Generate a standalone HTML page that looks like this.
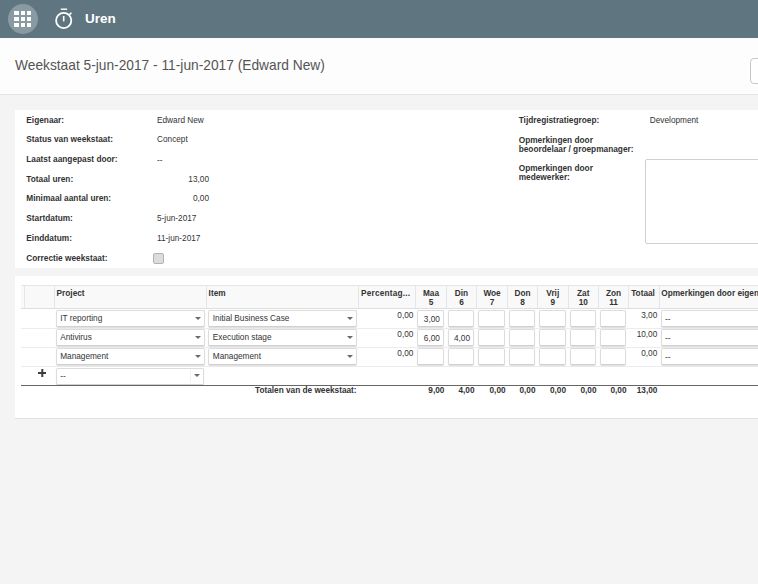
<!DOCTYPE html><html><head><meta charset="utf-8"><style>
*{box-sizing:border-box;margin:0;padding:0}
html,body{width:758px;height:584px;overflow:hidden;background:#f4f4f4;font-family:"Liberation Sans",sans-serif;color:#333}
div{position:absolute;white-space:nowrap}
#hdr{left:0;top:0;width:758px;height:38px;background:#5f7580}
#circ{left:8px;top:4px;width:30px;height:30px;border-radius:50%;background:#8a9aa2}
.sq{width:4.6px;height:4.5px;background:#fff}
#uren{left:85px;top:11.2px;font-size:13.5px;font-weight:bold;color:#fff}
#tbar{left:0;top:38px;width:758px;height:57px;background:#fdfdfd;border-bottom:1px solid #e4e4e4}
#title{left:15px;top:57.8px;font-size:13.75px;color:#555}
#btn{left:750px;top:58px;width:30px;height:26px;border:1px solid #c8c8c8;border-radius:4px;background:#fff}
.panel{left:15px;width:743px;background:#fff}
.lb{font-size:8.3px;font-weight:bold;color:#333;line-height:10px}
.vl{font-size:8.25px;color:#333;line-height:10px}
.hb{font-size:8.25px;font-weight:bold;color:#333;line-height:9px}
.sep{width:1px;background:#e1e8eb}
.dd{height:17px;border:1px solid #dcdcdc;border-bottom-color:#d0d0d0;border-radius:2px;background:#fff;box-shadow:0 1px 1px #dedede}
.dt{font-size:8.25px;color:#333;line-height:10px}
.arr{width:0;height:0;border-left:3px solid transparent;border-right:3px solid transparent;border-top:3.4px solid #6a6a6a}
.inp{height:17px;border:1px solid #dcdcdc;border-bottom-color:#d0d0d0;border-radius:2px;background:#fff;box-shadow:0 1px 1px #dedede}
.rs{height:1px;background:#ececec}
.num{font-size:8.25px;color:#333;line-height:10px;text-align:right}
.tot{font-size:8.25px;font-weight:bold;color:#333;line-height:10px;text-align:right}
</style></head><body>
<div id="hdr"><div id="circ"></div>
<div class="sq" style="left:14.2px;top:10.8px"></div>
<div class="sq" style="left:20.5px;top:10.8px"></div>
<div class="sq" style="left:26.8px;top:10.8px"></div>
<div class="sq" style="left:14.2px;top:16.7px"></div>
<div class="sq" style="left:20.5px;top:16.7px"></div>
<div class="sq" style="left:26.8px;top:16.7px"></div>
<div class="sq" style="left:14.2px;top:22.8px"></div>
<div class="sq" style="left:20.5px;top:22.8px"></div>
<div class="sq" style="left:26.8px;top:22.8px"></div>
<svg style="position:absolute;left:52px;top:6px" width="24" height="26" viewBox="0 0 24 26">
<circle cx="11.7" cy="14.5" r="7.6" fill="none" stroke="#fff" stroke-width="1.8"/>
<rect x="8.8" y="2.5" width="6.3" height="1.4" fill="#fff"/>
<rect x="10.9" y="10" width="1.6" height="5.4" fill="#fff"/>
<path d="M17.5 8.6 L19.4 6.7" stroke="#fff" stroke-width="1.6"/>
</svg>
<div id="uren">Uren</div></div>
<div id="tbar"></div><div id="title">Weekstaat 5-jun-2017 - 11-jun-2017 (Edward New)</div><div id="btn"></div>
<div class="panel" style="top:110px;height:158px"></div>
<div class="panel" style="top:276px;height:143px;border-bottom:1px solid #e2e2e2"></div>
<div class="lb" style="left:26.3px;top:114.50px">Eigenaar:</div>
<div class="vl" style="left:157px;top:115.50px">Edward New</div>
<div class="lb" style="left:26.3px;top:134.23px">Status van weekstaat:</div>
<div class="vl" style="left:157px;top:135.23px">Concept</div>
<div class="lb" style="left:26.3px;top:153.96px">Laatst aangepast door:</div>
<div class="vl" style="left:157px;top:155.76px">--</div>
<div class="lb" style="left:26.3px;top:173.69px">Totaal uren:</div>
<div class="vl" style="left:150px;width:59px;text-align:right;top:174.69px">13,00</div>
<div class="lb" style="left:26.3px;top:193.42px">Minimaal aantal uren:</div>
<div class="vl" style="left:150px;width:59px;text-align:right;top:194.42px">0,00</div>
<div class="lb" style="left:26.3px;top:213.15px">Startdatum:</div>
<div class="vl" style="left:157px;top:214.15px">5-jun-2017</div>
<div class="lb" style="left:26.3px;top:232.88px">Einddatum:</div>
<div class="vl" style="left:157px;top:233.88px">11-jun-2017</div>
<div class="lb" style="left:26.3px;top:252.61px">Correctie weekstaat:</div>
<div style="left:153.2px;top:253.01px;width:10.5px;height:10.5px;border:1px solid #b2b2b2;border-radius:2px;background:#dcdcdc"></div>
<div class="lb" style="left:518.7px;top:114.5px">Tijdregistratiegroep:</div>
<div class="vl" style="left:649.8px;top:116.2px">Development</div>
<div class="lb" style="left:518.7px;top:135.5px;line-height:9px">Opmerkingen door<br>beoordelaar / groepmanager:</div>
<div class="lb" style="left:518.7px;top:164.3px;line-height:9px">Opmerkingen door<br>medewerker:</div>
<div style="left:644.5px;top:159px;width:130px;height:85px;border:1px solid #d0d0d0;border-radius:2px;background:#fff"></div>
<div style="left:21px;top:285px;width:737px;height:24px;background:#f9f9f9;border-top:1px solid #e6e6e6;border-bottom:1px solid #dedede"></div>
<div class="sep" style="left:23.5px;top:286px;height:22px"></div>
<div class="sep" style="left:54.0px;top:286px;height:22px"></div>
<div class="sep" style="left:205.8px;top:286px;height:22px"></div>
<div class="sep" style="left:358.0px;top:286px;height:22px"></div>
<div class="sep" style="left:415.2px;top:286px;height:22px"></div>
<div class="sep" style="left:445.9px;top:286px;height:22px"></div>
<div class="sep" style="left:476.0px;top:286px;height:22px"></div>
<div class="sep" style="left:507.1px;top:286px;height:22px"></div>
<div class="sep" style="left:537.0px;top:286px;height:22px"></div>
<div class="sep" style="left:567.5px;top:286px;height:22px"></div>
<div class="sep" style="left:598.0px;top:286px;height:22px"></div>
<div class="sep" style="left:628.0px;top:286px;height:22px"></div>
<div class="sep" style="left:658.9px;top:286px;height:22px"></div>
<div class="hb" style="left:56.6px;top:289.0px">Project</div>
<div class="hb" style="left:208.6px;top:289.0px">Item</div>
<div class="hb" style="left:361.1px;top:289.0px;letter-spacing:0.19px">Percentag...</div>
<div class="hb" style="left:415.7px;width:30.69999999999999px;text-align:center;top:289.0px">Maa<br>5</div>
<div class="hb" style="left:446.4px;width:30.100000000000023px;text-align:center;top:289.0px">Din<br>6</div>
<div class="hb" style="left:476.5px;width:31.100000000000023px;text-align:center;top:289.0px">Woe<br>7</div>
<div class="hb" style="left:507.6px;width:29.899999999999977px;text-align:center;top:289.0px">Don<br>8</div>
<div class="hb" style="left:537.5px;width:30.5px;text-align:center;top:289.0px">Vrij<br>9</div>
<div class="hb" style="left:568px;width:30.5px;text-align:center;top:289.0px">Zat<br>10</div>
<div class="hb" style="left:598.5px;width:30.0px;text-align:center;top:289.0px">Zon<br>11</div>
<div class="hb" style="left:631.2px;top:289.0px">Totaal</div>
<div class="hb" style="left:661.3px;top:289.0px">Opmerkingen door eigenaar</div>
<div class="rs" style="left:21px;width:737px;top:328.1px"></div>
<div class="dd" style="left:55.6px;width:149.6px;top:309.7px"></div>
<div class="dt" style="left:60.2px;top:314.2px">IT reporting</div>
<div class="arr" style="left:195.3px;top:316.9px"></div>
<div class="dd" style="left:208.2px;width:148.8px;top:309.7px"></div>
<div class="dt" style="left:212.79999999999998px;top:314.2px">Initial Business Case</div>
<div class="arr" style="left:347.1px;top:316.9px"></div>
<div class="num" style="left:360px;width:53.4px;top:310.7px">0,00</div>
<div class="inp" style="left:417.4px;width:26.7px;top:309.7px"></div>
<div class="num" style="left:417.4px;width:26.7px;padding-right:4.2px;top:314.7px">3,00</div>
<div class="inp" style="left:448.1px;width:26.1px;top:309.7px"></div>
<div class="inp" style="left:478.2px;width:27.1px;top:309.7px"></div>
<div class="inp" style="left:509.3px;width:25.9px;top:309.7px"></div>
<div class="inp" style="left:539.2px;width:26.5px;top:309.7px"></div>
<div class="inp" style="left:569.7px;width:26.5px;top:309.7px"></div>
<div class="inp" style="left:600.2px;width:26.0px;top:309.7px"></div>
<div class="num" style="left:630px;width:27.3px;top:310.7px">3,00</div>
<div class="inp" style="left:661.2px;width:120px;top:309.7px"></div>
<div class="dt" style="left:665px;top:314.7px">--</div>
<div class="rs" style="left:21px;width:737px;top:347.2px"></div>
<div class="dd" style="left:55.6px;width:149.6px;top:328.8px"></div>
<div class="dt" style="left:60.2px;top:333.3px">Antivirus</div>
<div class="arr" style="left:195.3px;top:336.0px"></div>
<div class="dd" style="left:208.2px;width:148.8px;top:328.8px"></div>
<div class="dt" style="left:212.79999999999998px;top:333.3px">Execution stage</div>
<div class="arr" style="left:347.1px;top:336.0px"></div>
<div class="num" style="left:360px;width:53.4px;top:329.8px">0,00</div>
<div class="inp" style="left:417.4px;width:26.7px;top:328.8px"></div>
<div class="num" style="left:417.4px;width:26.7px;padding-right:4.2px;top:333.8px">6,00</div>
<div class="inp" style="left:448.1px;width:26.1px;top:328.8px"></div>
<div class="num" style="left:448.1px;width:26.1px;padding-right:4.2px;top:333.8px">4,00</div>
<div class="inp" style="left:478.2px;width:27.1px;top:328.8px"></div>
<div class="inp" style="left:509.3px;width:25.9px;top:328.8px"></div>
<div class="inp" style="left:539.2px;width:26.5px;top:328.8px"></div>
<div class="inp" style="left:569.7px;width:26.5px;top:328.8px"></div>
<div class="inp" style="left:600.2px;width:26.0px;top:328.8px"></div>
<div class="num" style="left:630px;width:27.3px;top:329.8px">10,00</div>
<div class="inp" style="left:661.2px;width:120px;top:328.8px"></div>
<div class="dt" style="left:665px;top:333.8px">--</div>
<div class="rs" style="left:21px;width:737px;top:366.3px"></div>
<div class="dd" style="left:55.6px;width:149.6px;top:347.9px"></div>
<div class="dt" style="left:60.2px;top:352.4px">Management</div>
<div class="arr" style="left:195.3px;top:355.1px"></div>
<div class="dd" style="left:208.2px;width:148.8px;top:347.9px"></div>
<div class="dt" style="left:212.79999999999998px;top:352.4px">Management</div>
<div class="arr" style="left:347.1px;top:355.1px"></div>
<div class="num" style="left:360px;width:53.4px;top:348.9px">0,00</div>
<div class="inp" style="left:417.4px;width:26.7px;top:347.9px"></div>
<div class="inp" style="left:448.1px;width:26.1px;top:347.9px"></div>
<div class="inp" style="left:478.2px;width:27.1px;top:347.9px"></div>
<div class="inp" style="left:509.3px;width:25.9px;top:347.9px"></div>
<div class="inp" style="left:539.2px;width:26.5px;top:347.9px"></div>
<div class="inp" style="left:569.7px;width:26.5px;top:347.9px"></div>
<div class="inp" style="left:600.2px;width:26.0px;top:347.9px"></div>
<div class="num" style="left:630px;width:27.3px;top:348.9px">0,00</div>
<div class="inp" style="left:661.2px;width:120px;top:347.9px"></div>
<div class="dt" style="left:665px;top:352.9px">--</div>
<svg style="position:absolute;left:37.9px;top:369px" width="8.6" height="8" viewBox="0 0 8.6 8"><rect x="0" y="3" width="8.6" height="2" fill="#3d3d3d"/><rect x="3.3" y="0" width="2" height="8" fill="#3d3d3d"/></svg>
<div class="dd" style="left:55.6px;width:148.4px;top:367.5px;height:17px"></div>
<div style="left:189.5px;top:369.5px;width:1px;height:13px;background:#f0f0f0"></div>
<div class="dt" style="left:60.2px;top:372.0px">--</div>
<div class="arr" style="left:194px;top:374.3px"></div>
<div style="left:21px;top:384.6px;width:737px;height:1.7px;background:#666"></div>
<div class="tot" style="left:200px;width:156.6px;top:385.5px">Totalen van de weekstaat:</div>
<div class="tot" style="left:406.4px;width:38px;top:385.5px">9,00</div>
<div class="tot" style="left:436.5px;width:38px;top:385.5px">4,00</div>
<div class="tot" style="left:467.6px;width:38px;top:385.5px">0,00</div>
<div class="tot" style="left:497.5px;width:38px;top:385.5px">0,00</div>
<div class="tot" style="left:528px;width:38px;top:385.5px">0,00</div>
<div class="tot" style="left:558.5px;width:38px;top:385.5px">0,00</div>
<div class="tot" style="left:588.5px;width:38px;top:385.5px">0,00</div>
<div class="tot" style="left:619.4px;width:38px;top:385.5px">13,00</div>
</body></html>
